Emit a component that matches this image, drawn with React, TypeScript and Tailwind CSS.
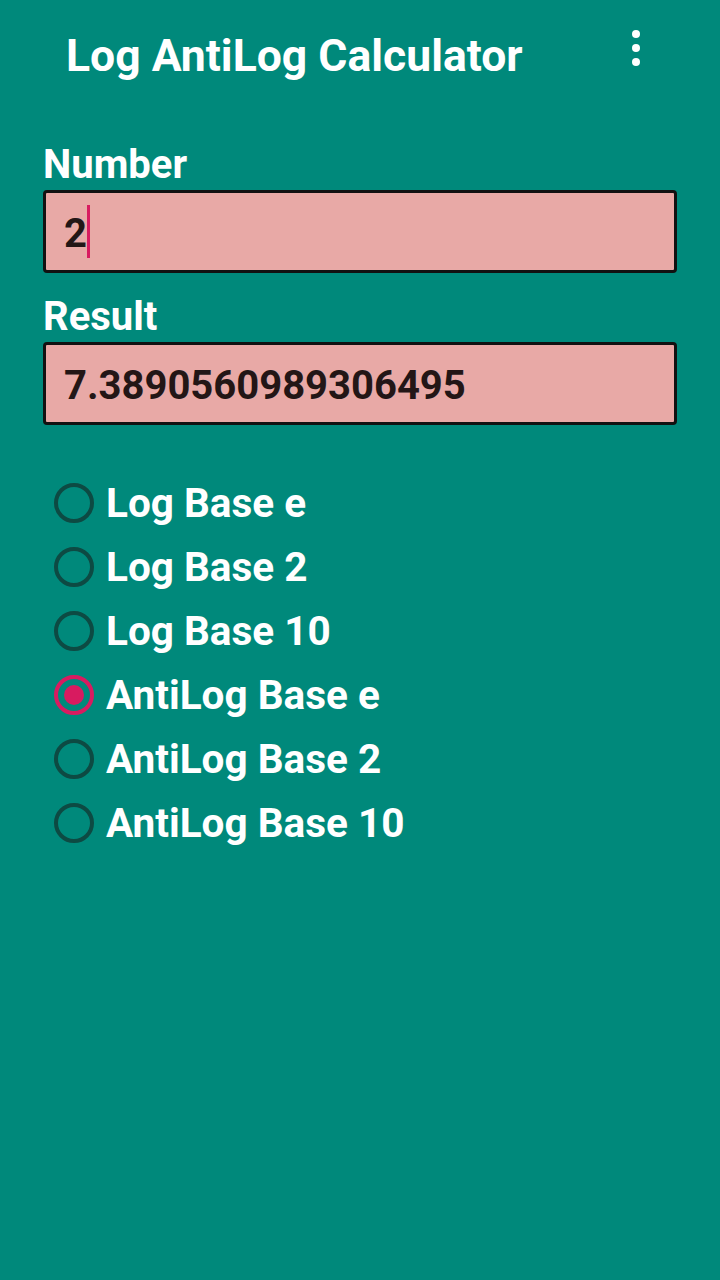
import React from "react";

const options = [
  "Log Base e",
  "Log Base 2",
  "Log Base 10",
  "AntiLog Base e",
  "AntiLog Base 2",
  "AntiLog Base 10",
];

export default function App() {
  return (
    <div
      className="w-[720px] h-[1280px] bg-[#00897b] text-white"
      style={{ fontFamily: "Roboto, 'Noto Sans', sans-serif" }}
    >
      <div className="h-[112px] flex items-center justify-between pl-[66px] pr-[80px]">
        <div className="text-[44.5px] font-bold leading-none">Log AntiLog Calculator</div>
        <div className="flex flex-col gap-[6px] -mt-[16px]">
          <div className="w-[8px] h-[8px] rounded-full bg-white" />
          <div className="w-[8px] h-[8px] rounded-full bg-white" />
          <div className="w-[8px] h-[8px] rounded-full bg-white" />
        </div>
      </div>

      <div className="px-[43px]">
        <div className="text-[40px] font-bold leading-[47px] mt-[29px]">Number</div>
        <div className="mt-[2px] h-[83px] rounded-[4px] border-[3px] border-[#111] bg-[#e8a9a6] flex items-center pl-[18px]">
          <span className="text-[40px] font-bold text-[#231616] leading-none pt-[5px]">2</span>
          <span className="w-[3px] h-[53px] bg-[#d81b60]" />
        </div>

        <div className="text-[40px] font-bold leading-[47px] mt-[20px]">Result</div>
        <div className="mt-[2px] h-[83px] rounded-[4px] border-[3px] border-[#111] bg-[#e8a9a6] flex items-center pl-[18px]">
          <span className="text-[40px] font-bold text-[#231616] leading-none pt-[4px]">7.3890560989306495</span>
        </div>

        <div className="mt-[46px] flex flex-col pl-[11px]">
          {options.map((o, i) => {
            const checked = i === 3;
            return (
              <div key={o} className="h-[64px] flex items-center gap-[12px]">
                <div
                  className={
                    checked
                      ? "w-[40px] h-[40px] rounded-full border-[4px] border-[#d81b60] flex items-center justify-center"
                      : "w-[40px] h-[40px] rounded-full border-[4px] border-[#0d4a43]"
                  }
                >
                  {checked && <div className="w-[20px] h-[20px] rounded-full bg-[#d81b60]" />}
                </div>
                <span className="text-[40.5px] font-bold leading-none">{o}</span>
              </div>
            );
          })}
        </div>
      </div>
    </div>
  );
}
